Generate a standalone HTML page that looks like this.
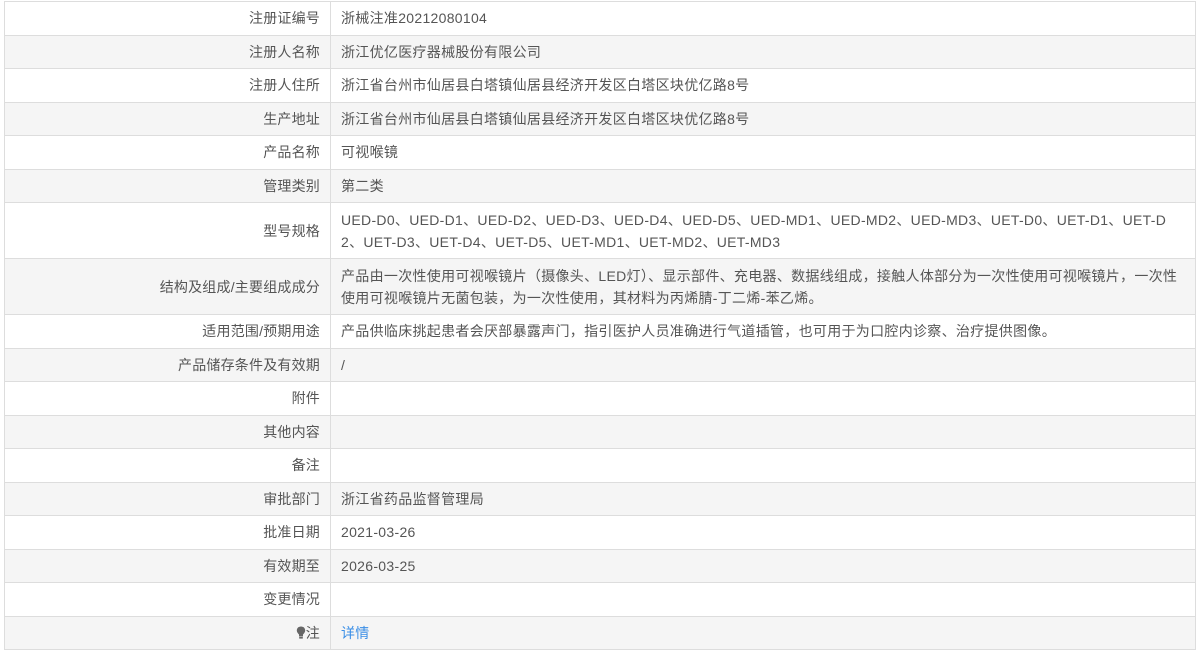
<!DOCTYPE html>
<html><head><meta charset="utf-8"><style>
body{margin:0;background:#fff;font-family:"Liberation Sans","Noto Sans CJK SC",sans-serif;font-size:14px;color:#555;}
table{position:absolute;left:4px;top:1px;width:1192px;border-collapse:collapse;}
td{border:1px solid #ddd;height:33.5px;padding:0 10px;line-height:22px;box-sizing:border-box;letter-spacing:0.3px;}
tr:nth-child(even) td{background:#f5f5f5;}
td.l{width:326px;text-align:right;padding-right:10px;letter-spacing:0.2px;}
tr.t td{height:56px;}
a{color:#3a8ee6;text-decoration:none;}
</style></head><body>
<table>
<tr><td class="l">注册证编号</td><td>浙械注准20212080104</td></tr>
<tr><td class="l">注册人名称</td><td>浙江优亿医疗器械股份有限公司</td></tr>
<tr><td class="l">注册人住所</td><td>浙江省台州市仙居县白塔镇仙居县经济开发区白塔区块优亿路8号</td></tr>
<tr><td class="l">生产地址</td><td>浙江省台州市仙居县白塔镇仙居县经济开发区白塔区块优亿路8号</td></tr>
<tr><td class="l">产品名称</td><td>可视喉镜</td></tr>
<tr><td class="l">管理类别</td><td>第二类</td></tr>
<tr class="t"><td class="l">型号规格</td><td>UED-D0、UED-D1、UED-D2、UED-D3、UED-D4、UED-D5、UED-MD1、UED-MD2、UED-MD3、UET-D0、UET-D1、UET-D<br>2、UET-D3、UET-D4、UET-D5、UET-MD1、UET-MD2、UET-MD3</td></tr>
<tr class="t"><td class="l">结构及组成/主要组成成分</td><td>产品由一次性使用可视喉镜片（摄像头、LED灯）、显示部件、充电器、数据线组成，接触人体部分为一次性使用可视喉镜片，一次性<br>使用可视喉镜片无菌包装，为一次性使用，其材料为丙烯腈-丁二烯-苯乙烯。</td></tr>
<tr><td class="l">适用范围/预期用途</td><td>产品供临床挑起患者会厌部暴露声门，指引医护人员准确进行气道插管，也可用于为口腔内诊察、治疗提供图像。</td></tr>
<tr><td class="l">产品储存条件及有效期</td><td>/</td></tr>
<tr><td class="l">附件</td><td></td></tr>
<tr><td class="l">其他内容</td><td></td></tr>
<tr><td class="l">备注</td><td></td></tr>
<tr><td class="l">审批部门</td><td>浙江省药品监督管理局</td></tr>
<tr><td class="l">批准日期</td><td>2021-03-26</td></tr>
<tr><td class="l">有效期至</td><td>2026-03-25</td></tr>
<tr><td class="l">变更情况</td><td></td></tr>
<tr><td class="l"><svg width="10" height="13" viewBox="0 0 10 13" style="vertical-align:-1px"><path d="M5 0.5C2.4 0.5 0.8 2.3 0.8 4.5c0 1.8 1.3 3 2.2 4v2h4v-2c0.9-1 2.2-2.2 2.2-4C9.2 2.3 7.6 0.5 5 0.5z" fill="#666"/><rect x="3.2" y="11" width="3.6" height="1.6" fill="#666"/></svg>注</td><td><a>详情</a></td></tr>
</table>
</body></html>
